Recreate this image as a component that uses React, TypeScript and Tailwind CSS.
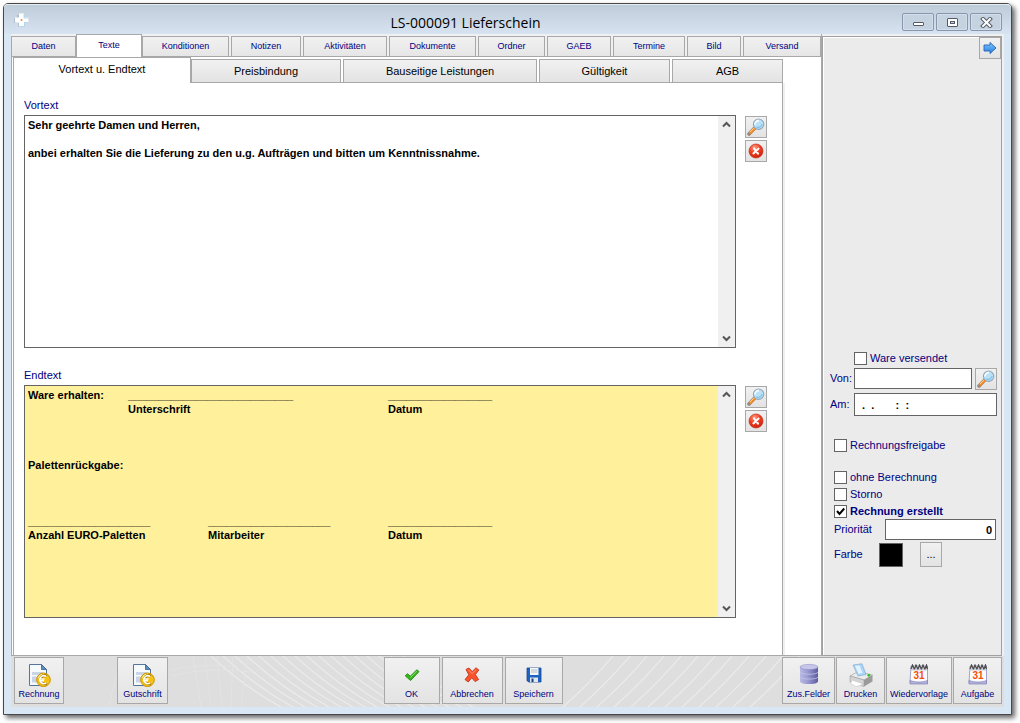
import { useState } from "react";
import type { ReactNode } from "react";
import clsx from "clsx";

const mainTabs = [
  { label: "Daten", size: "w-[65px]" },
  { label: "Texte", size: "w-[66px]" },
  { label: "Konditionen", size: "w-[87px] mr-[2px]" },
  { label: "Notizen", size: "w-[70px] mr-[2px]" },
  { label: "Aktivitäten", size: "w-[84px] mr-[2px]" },
  { label: "Dokumente", size: "w-[87px] mr-[2px]" },
  { label: "Ordner", size: "w-[67px] mr-[2px]" },
  { label: "GAEB", size: "w-[64px] mr-[2px]" },
  { label: "Termine", size: "w-[72px] mr-[2px]" },
  { label: "Bild", size: "w-[54px] mr-[2px]" },
  { label: "Versand", size: "flex-1" },
];

const subTabs = [
  { label: "Vortext u. Endtext", size: "w-[178px]" },
  { label: "Preisbindung", size: "w-[150px] mr-[2px]" },
  { label: "Bauseitige Leistungen", size: "w-[194px] mr-[2px]" },
  { label: "Gültigkeit", size: "w-[131px] mr-[2px]" },
  { label: "AGB", size: "flex-1" },
];

const vortext =
  "Sehr geehrte Damen und Herren,\n\nanbei erhalten Sie die Lieferung zu den u.g. Aufträgen und bitten um Kenntnissnahme.";

const line = (count: number) => "_".repeat(count);
const tabs = (count: number) => "\t".repeat(count);

const endtext = [
  "Ware erhalten:" + tabs(2) + line(27) + tabs(5) + line(17),
  tabs(5) + "Unterschrift" + tabs(10) + "Datum",
  "",
  "",
  "",
  "Palettenrückgabe:",
  "",
  "",
  "",
  line(20) + tabs(3) + line(20) + tabs(3) + line(17),
  "Anzahl EURO-Paletten" + tabs(4) + "Mitarbeiter" + tabs(7) + "Datum",
].join("\n");

/* Icons */

const AppLogo = () => (
  <svg className="mt-[3px]" width="15" height="15" viewBox="0 0 15 15" aria-hidden="true">
    <path d="M3 2h3v3H3zM0 5h3v5H0zM4 10h4v4H4z" fill="#98a6b2" opacity=".5" />
    <path d="M5 .6h5v4h4.400v5H10v4H5v-4H1v-5h4z" fill="#fff" />
    <path d="M10 1v4h4M6 13.500h4.500V9.500H14" fill="none" stroke="#a9d3ee" strokeWidth=".8" />
    <circle cx="7.500" cy="7" r="1" fill="#f08a3c" />
  </svg>
);

const SearchIcon = () => (
  <svg width="18" height="18" viewBox="0 0 18 18" aria-hidden="true">
    <path d="M2 16 8.200 9.600" stroke="#a58a70" strokeWidth="3.600" strokeLinecap="round" />
    <path d="M2.800 15.200 8 9.900" stroke="#fb8a1e" strokeWidth="2.600" />
    <path d="M2.800 14.200 7 9.900" stroke="#ffd79a" strokeWidth="1" />
    <path d="M1 14.800l2.200 2.200" stroke="#8d8d8d" strokeWidth="1.600" />
    <circle cx="11.600" cy="6.200" r="5.200" fill="#b9e2f8" stroke="#93a6b8" strokeWidth="1.100" />
    <path d="M8 6.400a3.800 3.800 0 0 1 3.800-3.800" fill="none" stroke="#fff" strokeWidth="1.600" />
    <path d="M9.500 9a4 4 0 0 0 5.600-3" fill="none" stroke="#86c4ea" strokeWidth="1.400" />
  </svg>
);

const DeleteIcon = () => (
  <svg width="16" height="16" viewBox="0 0 16 16" aria-hidden="true">
    <defs>
      <radialGradient id="red" cx=".4" cy=".25" r=".8">
        <stop offset="0" stopColor="#ff9a80" />
        <stop offset=".5" stopColor="#f03c1e" />
        <stop offset="1" stopColor="#c81e0a" />
      </radialGradient>
    </defs>
    <circle cx="8" cy="8" r="7" fill="url(#red)" stroke="#c0301c" strokeWidth=".7" />
    <path d="M6 5.400l4 5.200M10.600 5.600l-5.200 4.800" stroke="#fff" strokeWidth="2" strokeLinecap="round" />
  </svg>
);

const ArrowIcon = () => (
  <svg width="14" height="14" viewBox="0 0 14 14" aria-hidden="true">
    <defs>
      <linearGradient id="blue" x2="0" y2="1">
        <stop offset="0" stopColor="#86c8fa" />
        <stop offset="1" stopColor="#1f7be0" />
      </linearGradient>
    </defs>
    <path d="M1 4h6V1.400L13 7l-6 5.600V10H1z" fill="url(#blue)" stroke="#2565b8" strokeWidth=".9" />
  </svg>
);

const EuroDocIcon = () => (
  <svg width="24" height="24" viewBox="0 0 24 24" aria-hidden="true">
    <path d="M2.500 1.500h12l5 5v16h-17z" fill="#f7fafd" stroke="#56759c" />
    <path d="M14.500 1.500v5h5z" fill="#5f8fc0" stroke="#34618f" strokeWidth=".8" />
    <path d="M5 9h11v3H5zM5 13.500h6v6H5z" fill="#c9d4e6" />
    <circle cx="16.500" cy="16.800" r="6.800" fill="#f6c312" stroke="#c99200" />
    <path d="M11.500 15a5.500 5.500 0 0 1 6-3.500" fill="none" stroke="#ffec8a" strokeWidth="1.200" />
    <path d="M19.700 13.400a4 4 0 1 0 0 6.600" fill="none" stroke="#a87400" strokeWidth="2.800" />
    <path d="M19.300 13.700a3.900 3.900 0 1 0 0 6M12 16h5.500M12 17.800h5" fill="none" stroke="#fff" strokeWidth="1.500" />
  </svg>
);

const CheckIcon = () => (
  <svg width="16" height="16" viewBox="0 0 16 16" aria-hidden="true">
    <path
      d="M1.200 8.800 3.500 6.700 6.300 9.300 12.800 2.800 15 4.600 6.600 13.500z"
      fill="#35b81e"
      stroke="#23870f"
      strokeWidth=".9"
      strokeLinejoin="round"
    />
    <path d="M6.500 10.600 12.800 4" stroke="#7de05c" strokeWidth="1" />
  </svg>
);

const CrossIcon = () => (
  <svg width="16" height="16" viewBox="0 0 16 16" aria-hidden="true">
    <path
      d="M2 2.400 5 1 8.200 4.600 12 .8 14.800 3 11.400 7.600 14.600 12.600 11 14.600 7.800 10.800 4.200 15 1 12.600 4.800 7.800z"
      fill="#f8542c"
      stroke="#c8341a"
      strokeWidth=".9"
      strokeLinejoin="round"
    />
    <path d="M4.500 2.800 8 6.600 12 2.600" fill="none" stroke="#ff9678" strokeWidth="1" />
  </svg>
);

const SaveIcon = () => (
  <svg width="16" height="16" viewBox="0 0 16 16" aria-hidden="true">
    <path d="M1 1h14v14H2.500L1 13.500z" fill="#1f63c0" stroke="#164a94" strokeWidth=".8" />
    <path d="M4 1h8.500v7H4z" fill="#f5f7fa" />
    <path d="M5 3h6.500M5 5h6.500" stroke="#b4b9c0" />
    <path d="M4 10.500h8V15H4z" fill="#dfe6ee" />
    <path d="M5.500 11.500h2V15h-2z" fill="#1c3f78" />
  </svg>
);

const DatabaseIcon = () => (
  <svg width="24" height="24" viewBox="0 0 24 24" aria-hidden="true">
    <defs>
      <linearGradient id="db">
        <stop offset="0" stopColor="#b9b9e2" />
        <stop offset=".4" stopColor="#9d9dd4" />
        <stop offset="1" stopColor="#5c5ca0" />
      </linearGradient>
    </defs>
    <path d="M3 4v14.500c0 3.400 18 3.400 18 0V4z" fill="url(#db)" />
    <ellipse cx="12" cy="4" rx="9" ry="2.600" fill="#c6c6ea" stroke="#9090c4" strokeWidth=".6" />
    <path d="M3 9c0 3 18 3 18 0M3 13.800c0 3 18 3 18 0" fill="none" stroke="#c4c4e8" strokeWidth=".8" />
  </svg>
);

const PrinterIcon = () => (
  <svg width="26" height="24" viewBox="0 0 26 24" aria-hidden="true">
    <path d="M2 13 10 8.500 24.500 12 16 17z" fill="#ececec" stroke="#a4a4a4" strokeWidth=".7" />
    <path d="M5 2 14 .8 18 11.500 10 13z" fill="#a8d5f8" stroke="#84aed0" strokeWidth=".7" />
    <path d="M7 2.800 11.500 2.200 14.500 10 10.500 10.700z" fill="#e4f3ff" />
    <path d="M2 13v6l14 4.500V17z" fill="#d5d5d5" stroke="#9c9c9c" strokeWidth=".6" />
    <path d="M16 17v6.500l8.500-5V12z" fill="#9b9b9b" />
    <path d="M4 17 14 20.500v1.500L8 23.500 2.500 20.500z" fill="#fff" stroke="#bcbcbc" strokeWidth=".5" />
    <circle cx="20.800" cy="12.300" r="1.400" fill="#27c224" />
  </svg>
);

const CalendarIcon = () => (
  <svg width="22" height="22" viewBox="0 0 22 22" aria-hidden="true">
    <path d="M3 2h16.500v17H2z" fill="#fcfcff" stroke="#9a9ac4" strokeWidth=".9" />
    <path d="M2 16.500c6 2 12 2 17.500 0V20H2z" fill="#b4b4de" stroke="#7474aa" strokeWidth=".6" />
    <path d="M3 3h16v3.500H3z" fill="#cfcfd8" />
    <path
      d="M3 5 4.500 1 6.500 5.500M6.500 5 8 1l2 4.500M10 5l1.500-4 2 4.500M13.500 5 15 1l2 4.500M17 5l1.500-4 1 4"
      fill="none"
      stroke="#4c4c4c"
      strokeWidth="1.200"
    />
    <text x="11" y="15" textAnchor="middle" fontSize="10" fontWeight="bold" fontFamily="Liberation Sans, sans-serif" fill="#f4500a">
      31
    </text>
  </svg>
);

const Chevron = ({ down }: { down?: boolean }) => (
  <svg width="9" height="7" viewBox="0 0 9 7" aria-hidden="true">
    <path d={down ? "M1 1.500 4.500 5 8 1.500" : "M1 5.500 4.500 2 8 5.500"} fill="none" stroke="#555" strokeWidth="2" />
  </svg>
);

/* Controls */

const face = "border border-[#a8a8a8] bg-gradient-to-b from-[#f1f1f1] to-[#e3e3e3]";

const IconButton = ({ label, children }: { label: string; children: ReactNode }) => (
  <button type="button" aria-label={label} className={clsx(face, "flex size-[22px] shrink-0 items-center justify-center")}>
    {children}
  </button>
);

const WindowButton = ({ label, children }: { label: string; children: ReactNode }) => (
  <button
    type="button"
    aria-label={label}
    className="flex h-[18px] w-8 items-center justify-center rounded-[2px] border border-[#8795ad] bg-[#c5d2df] shadow-[inset_0_0_0_1px_#d3dfeb]"
  >
    <svg width="13" height="11" viewBox="0 0 13 11" aria-hidden="true">
      {children}
    </svg>
  </button>
);

const ToolButton = ({ label, size, children }: { label: string; size: string; children: ReactNode }) => (
  <button type="button" className={clsx(face, size, "flex h-[47px] shrink-0 flex-col items-center text-[9px] leading-3 text-[#000080]")}>
    <span className="flex h-[30px] items-end justify-center">
      <span className="flex h-[26px] items-center">{children}</span>
    </span>
    <span className="whitespace-nowrap">{label}</span>
  </button>
);

const CheckField = ({ label, checked, className }: { label: string; checked?: boolean; className?: string }) => (
  <label className={clsx("flex h-[13px] items-center gap-[3px]", className)}>
    <span className="relative flex size-[13px]">
      <input type="checkbox" defaultChecked={checked} className="peer size-[13px] appearance-none border border-[#646464] bg-white" />
      <svg className="pointer-events-none absolute inset-0 hidden peer-checked:block" width="13" height="13" viewBox="0 0 13 13" aria-hidden="true">
        <path d="M3 6 5.500 9 10.200 3.500" fill="none" stroke="#000" strokeWidth="2" />
      </svg>
    </span>
    <span>{label}</span>
  </label>
);

const TextField = ({ id, label, value, yellow }: { id: string; label: string; value: string; yellow?: boolean }) => (
  <div className="flex flex-1 flex-col">
    <label htmlFor={id} className="h-[17px] leading-[14px] text-[#000080]">
      {label}
    </label>
    <div className="flex flex-1 gap-[9px]">
      <div className="flex flex-1 border border-[#646464]">
        <textarea
          id={id}
          defaultValue={value}
          spellCheck={false}
          className={clsx(
            "flex-1 resize-none overflow-hidden px-[3px] py-[2px] font-bold leading-[14px] text-black outline-none [tab-size:20px]",
            yellow ? "bg-[#fff09b]" : "bg-white"
          )}
        />
        <div className="flex w-[17px] flex-col justify-between bg-[#f0f0f0]">
          <button type="button" aria-label="Nach oben" className="flex h-[17px] items-center justify-center">
            <Chevron />
          </button>
          <button type="button" aria-label="Nach unten" className="flex h-[17px] items-center justify-center">
            <Chevron down />
          </button>
        </div>
      </div>
      <div className="flex flex-col gap-[2px] pt-px">
        <IconButton label={label + " suchen"}>
          <SearchIcon />
        </IconButton>
        <IconButton label={label + " löschen"}>
          <DeleteIcon />
        </IconButton>
      </div>
    </div>
  </div>
);

const FooterLines = () => (
  <svg className="absolute inset-0 size-full" viewBox="0 0 993 51" preserveAspectRatio="xMidYMid slice" aria-hidden="true">
    <g fill="none" stroke="#ebebeb" strokeWidth="1.200">
      {Array.from({ length: 17 }, (_, i) => (
        <path key={i} d={`M${200 + i * 12} 0Q${232 + i * 12} 30 ${270 + i * 12} 51`} />
      ))}
      {Array.from({ length: 12 }, (_, i) => (
        <path key={i} d={`M${552 + i * 17} 51Q${580 + i * 17} 26 ${602 + i * 17} 0`} />
      ))}
    </g>
    <g fill="none" stroke="#e3e3e3">
      <path d="M98 51Q104 20 112 0M160 14Q185 8 220 10M160 20Q200 10 240 16M182 0 190 51M194 0 200 51M206 0 211 51M222 0 220 51M236 0 230 51" />
    </g>
  </svg>
);

const App = () => {
  const [mainTab, setMainTab] = useState("Texte");
  const [subTab, setSubTab] = useState("Vortext u. Endtext");

  return (
    <div className="flex min-h-screen bg-white pt-[3px] pr-2 pb-2 pl-[3px] font-['Liberation_Sans',Arial,sans-serif] text-[11px]">
      <div className="flex flex-1 flex-col rounded-t-[5px] border border-[#484848] bg-[#d9e6f3] px-[7px] pb-[7px] shadow-[3px_3px_5px_rgba(0,0,0,0.6)]">
        {/* Title bar */}
        <header className="-mx-[7px] flex h-[30px] items-center rounded-t-[4px] bg-gradient-to-b from-[#becbd8] to-[#d7e3f0] pr-[9px] pl-[10px] shadow-[inset_0_1px_0_#e6edf4]">
          <AppLogo />
          <h1 className="flex-1 pt-2 text-center font-['Open_Sans',sans-serif] text-[14px] leading-5 text-black">LS-000091 Lieferschein</h1>
          <div className="flex gap-[2px] pt-[6px]">
            <WindowButton label="Minimieren">
              <rect x="1.500" y="5.500" width="10" height="3" rx=".5" fill="#fff" stroke="#555b66" />
            </WindowButton>
            <WindowButton label="Maximieren">
              <rect x="1.500" y="1.500" width="10" height="8" rx=".5" fill="#fff" stroke="#555b66" />
              <rect x="4.500" y="4.500" width="4" height="2" fill="#c5d2df" stroke="#555b66" />
            </WindowButton>
            <WindowButton label="Schließen">
              <path d="M3 2l7 7M10 2l-7 7" stroke="#555b66" strokeWidth="4" strokeLinecap="square" />
              <path d="M3 2l7 7M10 2l-7 7" stroke="#fff" strokeWidth="2" strokeLinecap="square" />
            </WindowButton>
          </div>
        </header>

        <div className="flex flex-1 bg-[#f0f0f0] pr-[2px]">
          {/* Document area */}
          <main className="flex min-w-0 flex-1 flex-col">
            <div role="tablist" className="flex h-[23px] items-end border-b border-[#a8a8a8]">
              {mainTabs.map((tab) => (
                <button
                  key={tab.label}
                  type="button"
                  role="tab"
                  aria-selected={tab.label === mainTab}
                  onClick={() => setMainTab(tab.label)}
                  className={clsx(
                    "border border-b-0 border-[#a8a8a8] text-[9px] text-[#000080]",
                    tab.size,
                    tab.label === mainTab ? "-mb-px h-[23px] bg-white" : "h-5 bg-gradient-to-b from-[#f1f1f1] to-[#e6e6e6] pt-px"
                  )}
                >
                  {tab.label}
                </button>
              ))}
            </div>

            <div className="flex flex-1 border-b border-l border-[#a8a8a8] bg-white pr-[38px] pl-px">
              <div className="flex flex-1 flex-col">
                <div role="tablist" className="flex h-[26px] items-end border-b border-[#a8a8a8]">
                  {subTabs.map((tab) => (
                    <button
                      key={tab.label}
                      type="button"
                      role="tab"
                      aria-selected={tab.label === subTab}
                      onClick={() => setSubTab(tab.label)}
                      className={clsx(
                        "border border-b-0 border-[#a8a8a8] text-black",
                        tab.size,
                        tab.label === subTab ? "-mb-px h-[26px] bg-white pb-[2px]" : "h-[23px] bg-gradient-to-b from-[#f1f1f1] to-[#e3e3e3]"
                      )}
                    >
                      {tab.label}
                    </button>
                  ))}
                </div>

                <section className="flex flex-1 flex-col gap-5 border-x border-[#a8a8a8] pt-[15px] pr-[15px] pb-[37px] pl-[10px] shadow-[2px_0_0_#f0f0f0]">
                  <TextField id="vortext" label="Vortext" value={vortext} />
                  <TextField id="endtext" label="Endtext" value={endtext} yellow />
                </section>
              </div>
            </div>
          </main>

          {/* Side panel */}
          <aside className="flex w-[181px] shrink-0 border-l border-[#a8a8a8] pt-[2px]">
            <div className="flex min-w-0 flex-1 flex-col border border-[#a0a0a0] bg-[#ebebeb] text-[#000080] shadow-[inset_1px_1px_0_#fff]">
              <div className="flex justify-end">
                <IconButton label="Weiter">
                  <ArrowIcon />
                </IconButton>
              </div>

              <form className="mt-[293px] flex flex-col pr-1 pl-[7px]">
                <CheckField label="Ware versendet" className="ml-6" />

                <div className="mt-[3px] flex h-[21px] items-center">
                  <label htmlFor="von" className="w-6">
                    Von:
                  </label>
                  <input id="von" type="text" className="h-[21px] min-w-0 flex-1 border border-[#646464] bg-white px-1 text-black" />
                  <div className="ml-[3px]">
                    <IconButton label="Person suchen">
                      <SearchIcon />
                    </IconButton>
                  </div>
                </div>

                <div className="mt-1 flex h-[23px] items-center">
                  <label htmlFor="am" className="w-6">
                    Am:
                  </label>
                  <input
                    id="am"
                    type="text"
                    defaultValue=".  .       :  :"
                    className="h-[23px] min-w-0 flex-1 border border-[#646464] bg-white px-[7px] font-bold text-black"
                  />
                </div>

                <div className="mt-[23px] flex flex-col gap-1 pl-1">
                  <CheckField label="Rechnungsfreigabe" className="mb-[15px]" />
                  <CheckField label="ohne Berechnung" />
                  <CheckField label="Storno" />
                  <CheckField label="Rechnung erstellt" checked className="font-bold" />
                </div>

                <div className="mt-px flex h-[21px] items-center pr-px pl-1">
                  <label htmlFor="prio" className="w-[51px]">
                    Priorität
                  </label>
                  <input
                    id="prio"
                    type="text"
                    defaultValue="0"
                    className="h-[21px] min-w-0 flex-1 border border-[#646464] bg-white px-[3px] text-right font-bold text-black"
                  />
                </div>

                <div className="mt-[2px] flex h-[25px] items-center pl-1">
                  <span className="w-[45px]">Farbe</span>
                  <span className="size-6 border border-[#646464] bg-black" />
                  <button type="button" aria-label="Farbe wählen" className={clsx(face, "ml-[17px] h-[25px] w-[22px] text-black")}>
                    ...
                  </button>
                </div>
              </form>
            </div>
          </aside>
        </div>

        {/* Toolbar */}
        <footer className="relative h-[51px] bg-[#dedede]">
          <FooterLines />
          <div className="relative flex pt-px pr-[2px] pl-[3px]">
            <ToolButton label="Rechnung" size="w-[50px]">
              <EuroDocIcon />
            </ToolButton>
            <div className="w-[53px]" />
            <ToolButton label="Gutschrift" size="w-[51px]">
              <EuroDocIcon />
            </ToolButton>
            <div className="flex flex-1 justify-center gap-[2px] pr-1">
              <ToolButton label="OK" size="w-[56px]">
                <CheckIcon />
              </ToolButton>
              <ToolButton label="Abbrechen" size="w-[61px]">
                <CrossIcon />
              </ToolButton>
              <ToolButton label="Speichern" size="w-[58px]">
                <SaveIcon />
              </ToolButton>
            </div>
            <div className="flex gap-px">
              <ToolButton label="Zus.Felder" size="w-[53px]">
                <DatabaseIcon />
              </ToolButton>
              <ToolButton label="Drucken" size="w-[49px]">
                <PrinterIcon />
              </ToolButton>
              <ToolButton label="Wiedervorlage" size="w-[66px]">
                <CalendarIcon />
              </ToolButton>
              <ToolButton label="Aufgabe" size="w-[49px]">
                <CalendarIcon />
              </ToolButton>
            </div>
          </div>
        </footer>
      </div>
    </div>
  );
};

export default App;
